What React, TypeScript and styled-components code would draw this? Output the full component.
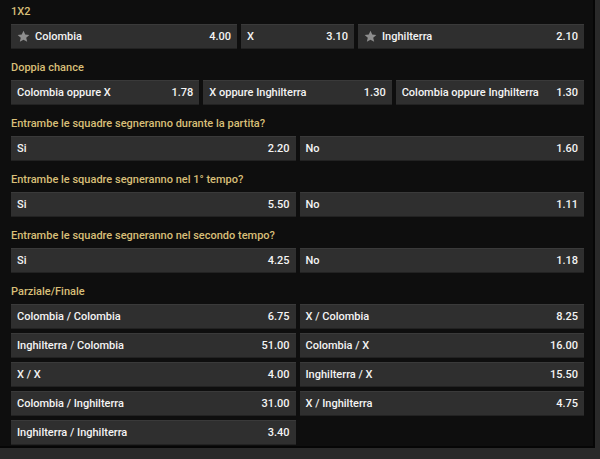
import React from "react";
import styled, { createGlobalStyle } from "styled-components";

const Global = createGlobalStyle`
  html, body { margin: 0; padding: 0; background: #2a2a2a; }
  body { font-family: Roboto, "Noto Sans", Arial, sans-serif; }
  * { box-sizing: border-box; }
`;

const Panel = styled.div`
  width: 595px;
  height: 448px;
  background: #0e0e0e;
  border-right: 2px solid #060606;
  border-bottom: 2px solid #060606;
  padding: 0 9px 0 11px;
  display: flex;
  flex-direction: column;
  gap: 7px;
`;

const Section = styled.section`
  display: flex;
  flex-direction: column;
`;

const Title = styled.div`
  height: 24px;
  display: flex;
  align-items: center;
  padding-bottom: 2px;
  color: #d8bf78;
  font-size: 11px;
  font-weight: 500;
`;

const Grid = styled.div<{ $cols: string }>`
  display: grid;
  grid-template-columns: ${(p) => p.$cols};
  gap: 4px;
`;

const Odd = styled.div`
  height: 25px;
  background: #2f2f2f;
  border-top: 1px solid #3a3a3a;
  border-bottom: 1px solid #222;
  display: flex;
  align-items: center;
  padding: 0 6px 0 6px;
  color: #f4f4f4;
  font-size: 11px;
  font-weight: 500;
  white-space: nowrap;
`;

const Label = styled.span`
  flex: 1;
  display: flex;
  align-items: center;
  gap: 5px;
`;

const Price = styled.span`
  margin-left: 8px;
`;

const Star = () => (
  <svg width="13" height="13" viewBox="0 0 24 24" aria-hidden>
    <path
      fill="#8e8e8e"
      d="M12 1.5l3.2 7 7.6.7-5.8 5.1 1.8 7.6L12 17.9l-6.8 4 1.8-7.6-5.8-5.1 7.6-.7z"
    />
  </svg>
);

type Item = { label: string; price: string; star?: boolean };

const sections: { title: string; cols: string; items: Item[] }[] = [
  {
    title: "1X2",
    cols: "2fr 1fr 2fr",
    items: [
      { label: "Colombia", price: "4.00", star: true },
      { label: "X", price: "3.10" },
      { label: "Inghilterra", price: "2.10", star: true },
    ],
  },
  {
    title: "Doppia chance",
    cols: "1fr 1fr 1fr",
    items: [
      { label: "Colombia oppure X", price: "1.78" },
      { label: "X oppure Inghilterra", price: "1.30" },
      { label: "Colombia oppure Inghilterra", price: "1.30" },
    ],
  },
  {
    title: "Entrambe le squadre segneranno durante la partita?",
    cols: "1fr 1fr",
    items: [
      { label: "Si", price: "2.20" },
      { label: "No", price: "1.60" },
    ],
  },
  {
    title: "Entrambe le squadre segneranno nel 1° tempo?",
    cols: "1fr 1fr",
    items: [
      { label: "Si", price: "5.50" },
      { label: "No", price: "1.11" },
    ],
  },
  {
    title: "Entrambe le squadre segneranno nel secondo tempo?",
    cols: "1fr 1fr",
    items: [
      { label: "Si", price: "4.25" },
      { label: "No", price: "1.18" },
    ],
  },
  {
    title: "Parziale/Finale",
    cols: "1fr 1fr",
    items: [
      { label: "Colombia / Colombia", price: "6.75" },
      { label: "X / Colombia", price: "8.25" },
      { label: "Inghilterra / Colombia", price: "51.00" },
      { label: "Colombia / X", price: "16.00" },
      { label: "X / X", price: "4.00" },
      { label: "Inghilterra / X", price: "15.50" },
      { label: "Colombia / Inghilterra", price: "31.00" },
      { label: "X / Inghilterra", price: "4.75" },
      { label: "Inghilterra / Inghilterra", price: "3.40" },
    ],
  },
];

export default function App() {
  return (
    <>
      <Global />
      <Panel>
        {sections.map((s) => (
          <Section key={s.title}>
            <Title>{s.title}</Title>
            <Grid $cols={s.cols}>
              {s.items.map((it, i) => (
                <Odd key={i}>
                  <Label>
                    {it.star && <Star />}
                    {it.label}
                  </Label>
                  <Price>{it.price}</Price>
                </Odd>
              ))}
            </Grid>
          </Section>
        ))}
      </Panel>
    </>
  );
}
